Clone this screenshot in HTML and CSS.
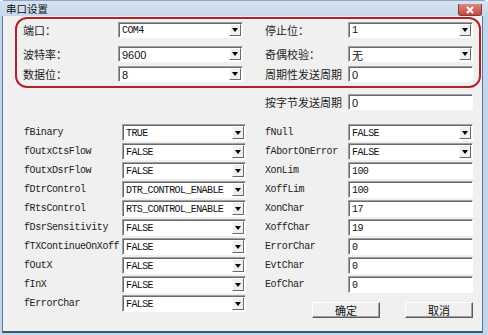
FILE: index.html
```html
<!DOCTYPE html>
<html lang="zh-CN">
<head>
    <meta charset="UTF-8">
    <title>串口设置</title>
    <link rel="stylesheet" href="styles.css">
</head>
<body>
    <!-- Serial port settings dialog -->
    <div class="window">
        <div class="titlebar">
            <span class="title">串口设置</span>
            <button class="close" aria-label="关闭">
                <svg width="10" height="8" viewBox="0 0 10 8" aria-hidden="true">
                    <path d="M2 1 L8 7 M8 1 L2 7" stroke="#fff" stroke-width="2" fill="none"/>
                </svg>
            </button>
        </div>

        <div class="client">
            <!-- Main port parameters (marked group) -->
            <div class="port-group">
                <div class="grid-top">
                    <span class="lbl">端口：</span>
                    <div class="combo"><span class="val mono">COM4</span><span class="drop"></span></div>
                    <span class="lbl r">停止位：</span>
                    <div class="combo"><span class="val mono">1</span><span class="drop"></span></div>

                    <span class="lbl">波特率：</span>
                    <div class="combo"><span class="val sans">9600</span><span class="drop"></span></div>
                    <span class="lbl r">奇偶校验：</span>
                    <div class="combo"><span class="val cjk">无</span><span class="drop"></span></div>

                    <span class="lbl">数据位：</span>
                    <div class="combo"><span class="val sans">8</span><span class="drop"></span></div>
                    <span class="lbl r">周期性发送周期</span>
                    <div class="edit"><span class="val sans">0</span></div>
                </div>
            </div>

            <div class="grid-top extra">
                <span class="lbl r">按字节发送周期</span>
                <div class="edit"><span class="val sans">0</span></div>
            </div>

            <!-- DCB flags -->
            <div class="grid-dcb">
                <span class="lbl-m">fBinary</span>
                <div class="combo"><span class="val mono">TRUE</span><span class="drop"></span></div>
                <span class="lbl-m r">fNull</span>
                <div class="combo"><span class="val mono">FALSE</span><span class="drop"></span></div>

                <span class="lbl-m">fOutxCtsFlow</span>
                <div class="combo"><span class="val mono">FALSE</span><span class="drop"></span></div>
                <span class="lbl-m r">fAbortOnError</span>
                <div class="combo"><span class="val mono">FALSE</span><span class="drop"></span></div>

                <span class="lbl-m">fOutxDsrFlow</span>
                <div class="combo"><span class="val mono">FALSE</span><span class="drop"></span></div>
                <span class="lbl-m r">XonLim</span>
                <div class="edit"><span class="val mono">100</span></div>

                <span class="lbl-m">fDtrControl</span>
                <div class="combo"><span class="val mono">DTR_CONTROL_ENABLE</span><span class="drop"></span></div>
                <span class="lbl-m r">XoffLim</span>
                <div class="edit"><span class="val mono">100</span></div>

                <span class="lbl-m">fRtsControl</span>
                <div class="combo"><span class="val mono">RTS_CONTROL_ENABLE</span><span class="drop"></span></div>
                <span class="lbl-m r">XonChar</span>
                <div class="edit"><span class="val mono">17</span></div>

                <span class="lbl-m">fDsrSensitivity</span>
                <div class="combo"><span class="val mono">FALSE</span><span class="drop"></span></div>
                <span class="lbl-m r">XoffChar</span>
                <div class="edit"><span class="val mono">19</span></div>

                <span class="lbl-m">fTXContinueOnXoff</span>
                <div class="combo"><span class="val mono">FALSE</span><span class="drop"></span></div>
                <span class="lbl-m r">ErrorChar</span>
                <div class="edit"><span class="val mono">0</span></div>

                <span class="lbl-m">fOutX</span>
                <div class="combo"><span class="val mono">FALSE</span><span class="drop"></span></div>
                <span class="lbl-m r">EvtChar</span>
                <div class="edit"><span class="val mono">0</span></div>

                <span class="lbl-m">fInX</span>
                <div class="combo"><span class="val mono">FALSE</span><span class="drop"></span></div>
                <span class="lbl-m r">EofChar</span>
                <div class="edit"><span class="val mono">0</span></div>

                <span class="lbl-m">fErrorChar</span>
                <div class="combo"><span class="val mono">FALSE</span><span class="drop"></span></div>
                <div class="actions">
                    <button class="btn">确定</button>
                    <button class="btn">取消</button>
                </div>
            </div>
        </div>
    </div>
</body>
</html>
```

FILE: styles.css
```css
/* Reset */
*,
*::before,
*::after {
    margin: 0;
    padding: 0;
    box-sizing: border-box;
}

body {
    background: #fff;
    font-family: 'Noto Sans CJK SC', 'Liberation Sans', sans-serif;
    color: #1c1c1c;
    overflow: hidden;
}

/* Window frame */
.window {
    width: 488px;
    height: 335px;
    display: flex;
    flex-direction: column;
    background: #c3d6ec;
    border-top: 1px solid #8ea6c2;
    border-radius: 5px 5px 0 0;
}

.titlebar {
    height: 15px;
    display: flex;
    justify-content: space-between;
    align-items: flex-end;
    padding: 0 6px 0 6px;
    background: linear-gradient(#d6e2f0, #c8d9ed);
}

.title {
    font-size: 10.5px;
    line-height: 14px;
    color: #111;
    align-self: center;
}

.close {
    width: 24px;
    height: 12px;
    display: flex;
    align-items: center;
    justify-content: center;
    border: 1px solid #8a3a36;
    border-top: none;
    border-radius: 0 0 3px 3px;
    background: linear-gradient(#d98a80, #c24a40);
}

/* Client area */
.client {
    flex: 1;
    margin: 0 5px 2px 2px;
    background: #f0f0f0;
    border: 1px solid #56789a;
    border-top: none;
    border-bottom: 2px solid #2f5f72;
}

/* Red highlight round the port group */
.port-group {
    margin: 1px 1px 0 12px;
    padding: 3px 5px 4px 6px;
    border: 2px solid #b0232c;
    border-radius: 12px;
}

.grid-top {
    display: grid;
    grid-template-columns: 95px 125px 105px 125px;
    grid-template-rows: 24px 20px 16px;
    align-items: start;
}

.grid-top.extra {
    grid-template-rows: 16px;
    margin: 6px 0 0 20px;
}

.grid-top.extra .lbl {
    grid-column: 3;
}

.lbl {
    font-size: 11px;
    line-height: 16px;
    white-space: nowrap;
}

.lbl.r {
    padding-left: 22px;
}

.grid-dcb {
    display: grid;
    grid-template-columns: 98px 124px 102px 125px;
    grid-auto-rows: 17px;
    row-gap: 2px;
    margin: 14px 0 0 21px;
    align-items: center;
}

.lbl-m {
    font-family: 'Liberation Mono', monospace;
    font-size: 10px;
    letter-spacing: -0.4px;
    color: #202020;
    white-space: nowrap;
}

.lbl-m.r {
    padding-left: 19px;
}

/* Sunken fields */
.combo,
.edit {
    height: 16px;
    display: flex;
    align-items: center;
    background: #fff;
    border-top: 1px solid #a0a0a0;
    border-left: 1px solid #a0a0a0;
    border-right: 1px solid #fff;
    border-bottom: 1px solid #fff;
    box-shadow: inset 1px 1px 0 #6a6a6a;
    overflow: hidden;
}

.grid-dcb .combo,
.grid-dcb .edit {
    height: 17px;
}

.val {
    flex: 1;
    padding: 1px 0 0 3px;
    white-space: nowrap;
    color: #111;
}

.mono {
    font-family: 'Liberation Mono', monospace;
    font-size: 10px;
    letter-spacing: -0.6px;
}

.sans {
    font-family: 'Liberation Sans', sans-serif;
    font-size: 11px;
}

.cjk {
    font-size: 11px;
}

.drop {
    width: 12px;
    align-self: stretch;
    margin: 1px 1px 1px 0;
    display: flex;
    align-items: center;
    justify-content: center;
    background: #f0f0f0;
    border-top: 1px solid #fff;
    border-left: 1px solid #fff;
    border-right: 1px solid #6a6a6a;
    border-bottom: 1px solid #6a6a6a;
}

.drop::after {
    content: '';
    border-style: solid;
    border-width: 4px 3.5px 0 3.5px;
    border-color: #000 transparent transparent transparent;
}

/* Push buttons */
.actions {
    grid-column: 3 / 5;
    display: flex;
    justify-content: flex-end;
    gap: 25px;
    align-self: start;
    margin-top: 7px;
}

.btn {
    width: 68px;
    height: 16px;
    font-family: 'Noto Sans CJK SC', sans-serif;
    font-size: 11px;
    line-height: 12px;
    color: #111;
    background: #f0f0f0;
    border-top: 1px solid #fff;
    border-left: 1px solid #fff;
    border-right: 1px solid #5a5a5a;
    border-bottom: 1px solid #5a5a5a;
    box-shadow: inset -1px -1px 0 #a0a0a0;
}
```
